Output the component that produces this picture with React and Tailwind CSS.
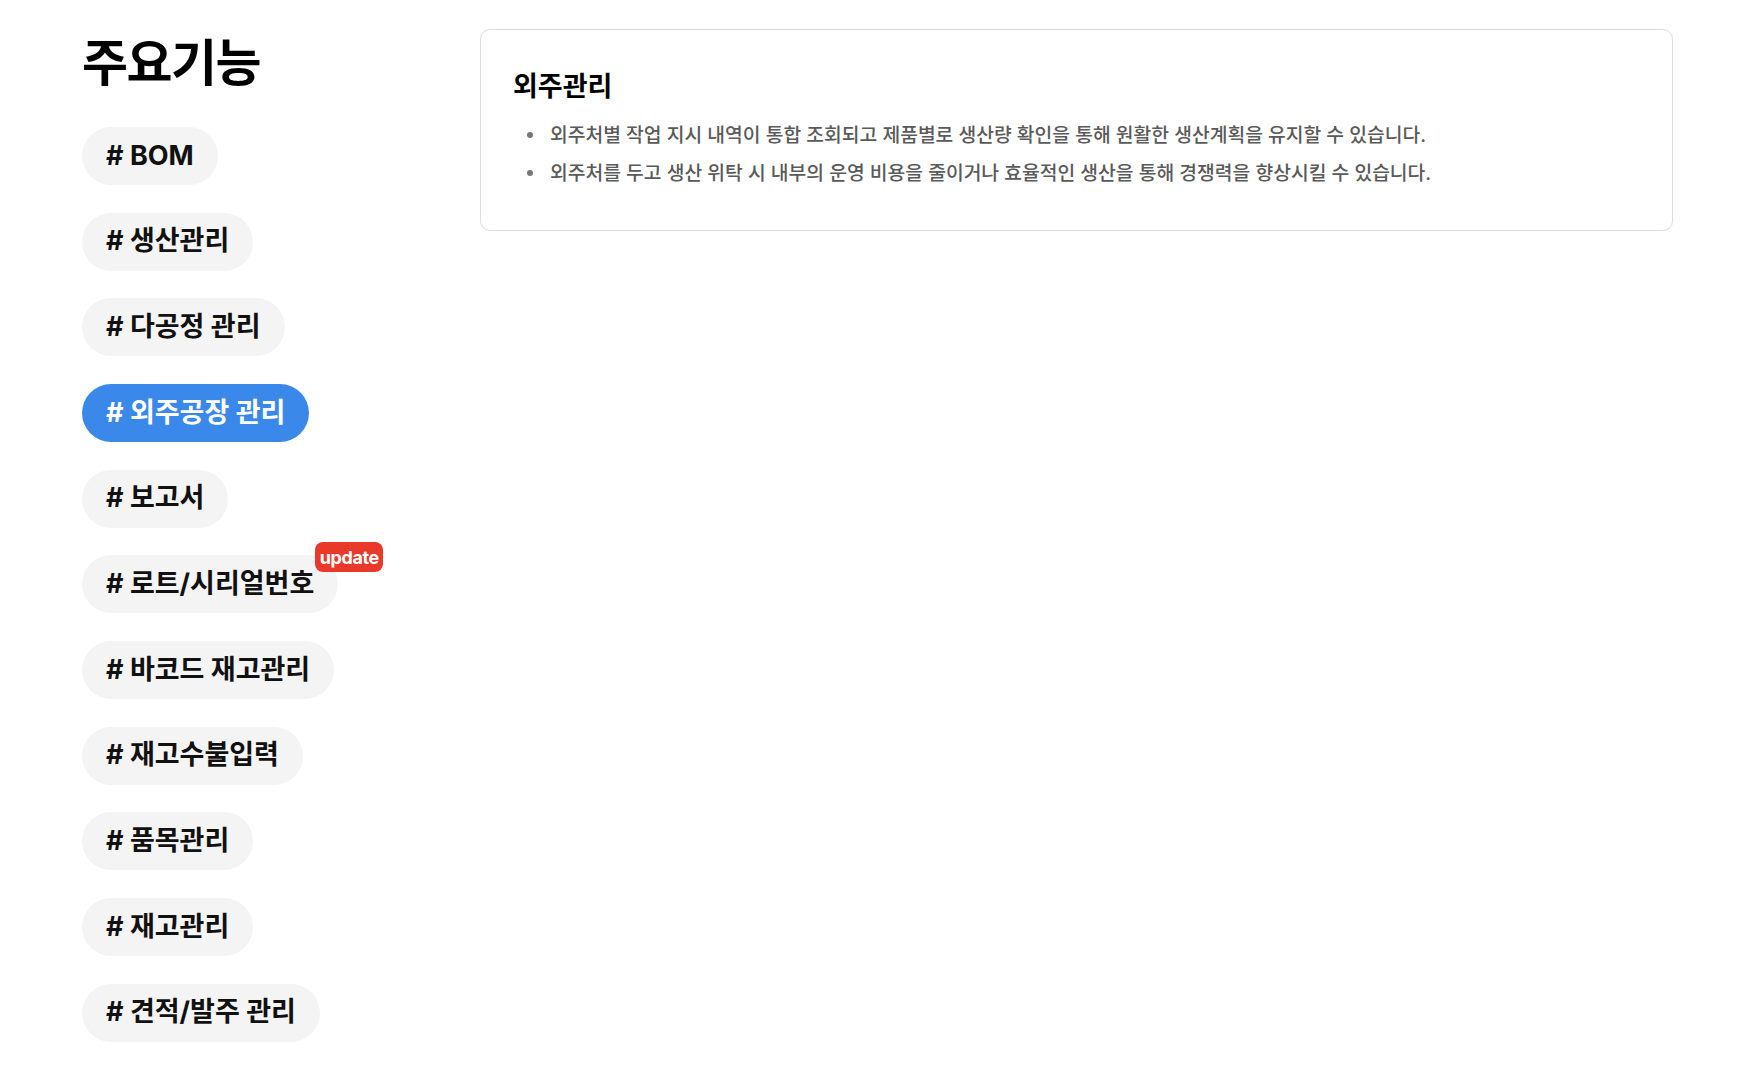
import { useState } from 'react'

const FEATURES = [
  { id: 'bom', label: '# BOM' },
  { id: 'prod', label: '# 생산관리' },
  { id: 'multi', label: '# 다공정 관리' },
  { id: 'outsource', label: '# 외주공장 관리' },
  { id: 'report', label: '# 보고서' },
  { id: 'lot', label: '# 로트/시리얼번호', update: true },
  { id: 'barcode', label: '# 바코드 재고관리' },
  { id: 'inout', label: '# 재고수불입력' },
  { id: 'item', label: '# 품목관리' },
  { id: 'stock', label: '# 재고관리' },
  { id: 'quote', label: '# 견적/발주 관리' },
]

const DETAIL = {
  title: '외주관리',
  lines: [
    '외주처별 작업 지시 내역이 통합 조회되고 제품별로 생산량 확인을 통해 원활한 생산계획을 유지할 수 있습니다.',
    '외주처를 두고 생산 위탁 시 내부의 운영 비용을 줄이거나 효율적인 생산을 통해 경쟁력을 향상시킬 수 있습니다.',
  ],
}

export default function App() {
  const [active, setActive] = useState('outsource')

  return (
    <div
      className="min-h-[1066px] bg-white flex pl-[82px] pr-[73px] pt-[29px] text-[#111]"
      style={{ fontFamily: 'Inter, "Noto Sans CJK KR", sans-serif' }}
    >
      <div className="w-[398px] shrink-0">
        <h1 className="mt-[4px] text-[50px] leading-[60px] font-bold tracking-[-1.5px] text-black">주요기능</h1>

        <div className="mt-[34px] flex flex-col items-start gap-[27.67px]">
          {FEATURES.map((f) => (
            <button
              key={f.id}
              onClick={() => setActive(f.id)}
              className={
                'relative h-[58px] px-6 rounded-full flex items-center text-[27px] font-bold whitespace-nowrap ' +
                (active === f.id ? 'bg-[#3b88eb] text-white' : 'bg-[#f4f4f4] text-[#111]')
              }
            >
              {f.label}
              {f.update && (
                <span className="absolute top-[-13px] right-[-45px] h-[30px] w-[68px] rounded-[8px] bg-[#e8392b] text-white text-[18px] font-bold tracking-[-0.4px] flex items-center justify-center">
                  update
                </span>
              )}
            </button>
          ))}
        </div>
      </div>

      <div className="flex-1">
        <div className="border border-[#dcdcdc] rounded-[10px] pl-8 pr-8 pt-[39px] pb-[38px]">
          <h2 className="text-[27px] leading-[36px] font-bold text-black">{DETAIL.title}</h2>
          <ul className="mt-[11px]">
            {DETAIL.lines.map((line, i) => (
              <li key={i} className="flex items-center pl-[14px] text-[19.3px] leading-[38px] font-medium text-[#5a5a5a]">
                <span className="w-[6px] h-[6px] rounded-full bg-[#777] shrink-0 mr-[17px]" />
                {line}
              </li>
            ))}
          </ul>
        </div>
      </div>
    </div>
  )
}
